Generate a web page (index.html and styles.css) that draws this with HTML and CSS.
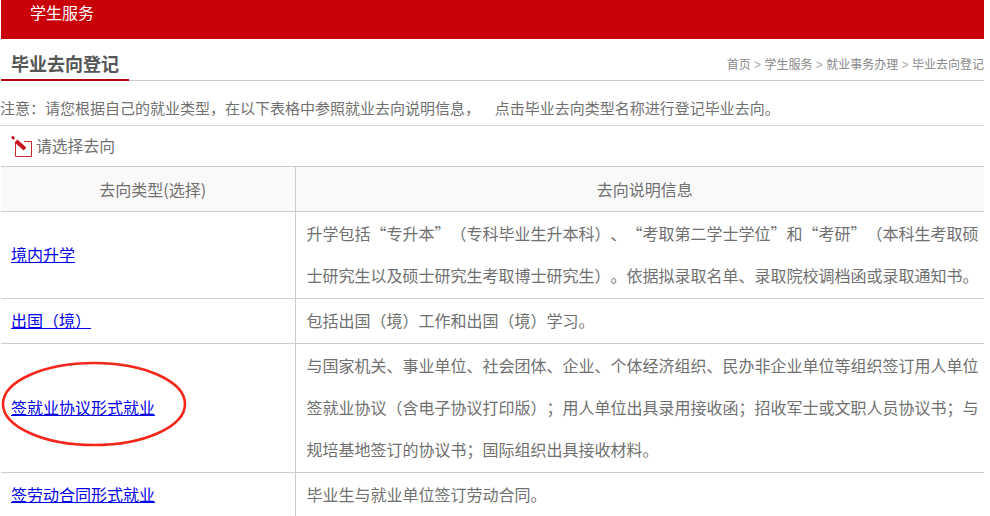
FILE: index.html
```html
<!DOCTYPE html>
<html lang="zh-CN">
<head>
<meta charset="utf-8">
<title>毕业去向登记</title>
<link rel="stylesheet" href="styles.css">
</head>
<body>
<div class="page">
  <header class="topbar"><span class="topbar-label">学生服务</span></header>
  <div class="heading">
    <h1 class="heading-title">毕业去向登记</h1>
    <div class="crumbs">首页 <span class="sep">&gt;</span> 学生服务 <span class="sep">&gt;</span> 就业事务办理 <span class="sep">&gt;</span> 毕业去向登记</div>
  </div>
  <p class="notice">注意：请您根据自己的就业类型，在以下表格中参照就业去向说明信息，&nbsp;&nbsp;&nbsp;&nbsp;&nbsp;点击毕业去向类型名称进行登记毕业去向。</p>
  <div class="choose">
    <svg class="choose-icon" width="22" height="22" viewBox="0 0 22 22" aria-hidden="true">
      <path d="M4.5 8V21.5H20.5V6.5H13" fill="none" stroke="#c9282d" stroke-width="1"/>
      <path d="M5 6L14 14" stroke="#c9141b" stroke-width="4" fill="none"/>
      <path d="M0 2.5L2 0.5L4 3L2.5 5Z" fill="#c9141b"/>
    </svg>
    <span>请选择去向</span>
  </div>
  <div class="table-wrap">
    <table class="types">
      <colgroup><col class="col-a"><col class="col-b"></colgroup>
      <thead>
        <tr class="row-head"><th>去向类型(选择)</th><th class="th-desc">去向说明信息</th></tr>
      </thead>
      <tbody>
        <tr class="row-2">
          <td class="cell-link"><a href="#">境内升学</a></td>
          <td>升学包括“专升本”（专科毕业生升本科）、“考取第二学士学位”和“考研”（本科生考取硕士研究生以及硕士研究生考取博士研究生）。依据拟录取名单、录取院校调档函或录取通知书。</td>
        </tr>
        <tr class="row-1">
          <td class="cell-link"><a href="#">出国（境）</a></td>
          <td>包括出国（境）工作和出国（境）学习。</td>
        </tr>
        <tr class="row-3">
          <td class="cell-link"><a href="#">签就业协议形式就业</a></td>
          <td>与国家机关、事业单位、社会团体、企业、个体经济组织、民办非企业单位等组织签订用人单位签就业协议（含电子协议打印版）；用人单位出具录用接收函；招收军士或文职人员协议书；与规培基地签订的协议书；国际组织出具接收材料。</td>
        </tr>
        <tr class="row-1">
          <td class="cell-link"><a href="#">签劳动合同形式就业</a></td>
          <td>毕业生与就业单位签订劳动合同。</td>
        </tr>
      </tbody>
    </table>
    <svg class="ring" width="186" height="86" viewBox="0 0 186 86" aria-hidden="true">
      <ellipse cx="93" cy="43" rx="91" ry="41" fill="none" stroke="#f5261a" stroke-width="2.6"/>
    </svg>
  </div>
</div>
</body>
</html>
```
FILE: styles.css
```css
html, body {
  margin: 0;
  padding: 0;
  height: 516px;
  overflow: hidden;
  background: #fff;
}
body {
  font-family: "Noto Sans CJK SC", "Liberation Sans", sans-serif;
  color: #707070;
  text-spacing-trim: space-all;
}
.page {
  width: 983px;
  margin-left: 1px;
}
.topbar {
  height: 39px;
  background: #c90007;
  padding-left: 29px;
  box-sizing: border-box;
}
.topbar-label {
  display: block;
  color: #fff;
  font-size: 16px;
  line-height: 25px;
}
.heading {
  height: 42px;
  box-sizing: border-box;
  border-bottom: 1px solid #ccc;
  display: flex;
  justify-content: space-between;
  align-items: flex-end;
}
.heading-title {
  margin: 0 0 -1px;
  width: 128px;
  box-sizing: border-box;
  padding-left: 10px;
  height: 29px;
  border-bottom: 2px solid #b5050c;
  font-size: 18px;
  font-weight: 700;
  line-height: 23px;
  color: #555;
}
.crumbs {
  font-size: 12px;
  line-height: 20px;
  height: 26px;
  color: #888;
}
.sep {
  font-family: "Liberation Sans", sans-serif;
  color: #aaa;
  margin: 0 0.7px;
}
.notice {
  margin: 0 0 0 -1px;
  height: 45px;
  box-sizing: border-box;
  border-bottom: 1px solid #d5d5d5;
  font-size: 15px;
  line-height: 54px;
  word-spacing: -0.4px;
  overflow: hidden;
  white-space: nowrap;
}
.choose {
  height: 40px;
  display: flex;
  align-items: center;
  gap: 3px;
  padding-left: 10px;
  font-size: 15.8px;
  line-height: 22px;
}
.choose-icon {
  flex: none;
}
.table-wrap {
  position: relative;
}
.types {
  width: 983px;
  border-collapse: collapse;
  table-layout: fixed;
  font-size: 16px;
  border-top: 1px solid #ccc;
}
.col-a {
  width: 294px;
}
.types th, .types td {
  padding: 0 5px 2px 11px;
  border-bottom: 1px solid #ccc;
  border-left: 1px solid #ccc;
  vertical-align: middle;
}
.types th:first-child, .types td:first-child {
  border-left: 0;
  padding-left: 10px;
}
.types th {
  background: #f9f9f9;
  font-weight: 400;
  text-align: center;
  padding: 0;
}
.types .th-desc {
  padding-left: 10px;
}
.row-head {
  height: 45px;
}
.types td {
  line-height: 42px;
}
.row-1 {
  height: 45px;
}
.row-2 {
  height: 87px;
}
.row-3 {
  height: 129px;
}
.cell-link a {
  color: #00e;
  text-decoration: underline;
}
.ring {
  position: absolute;
  left: 0;
  top: 195px;
}
```
